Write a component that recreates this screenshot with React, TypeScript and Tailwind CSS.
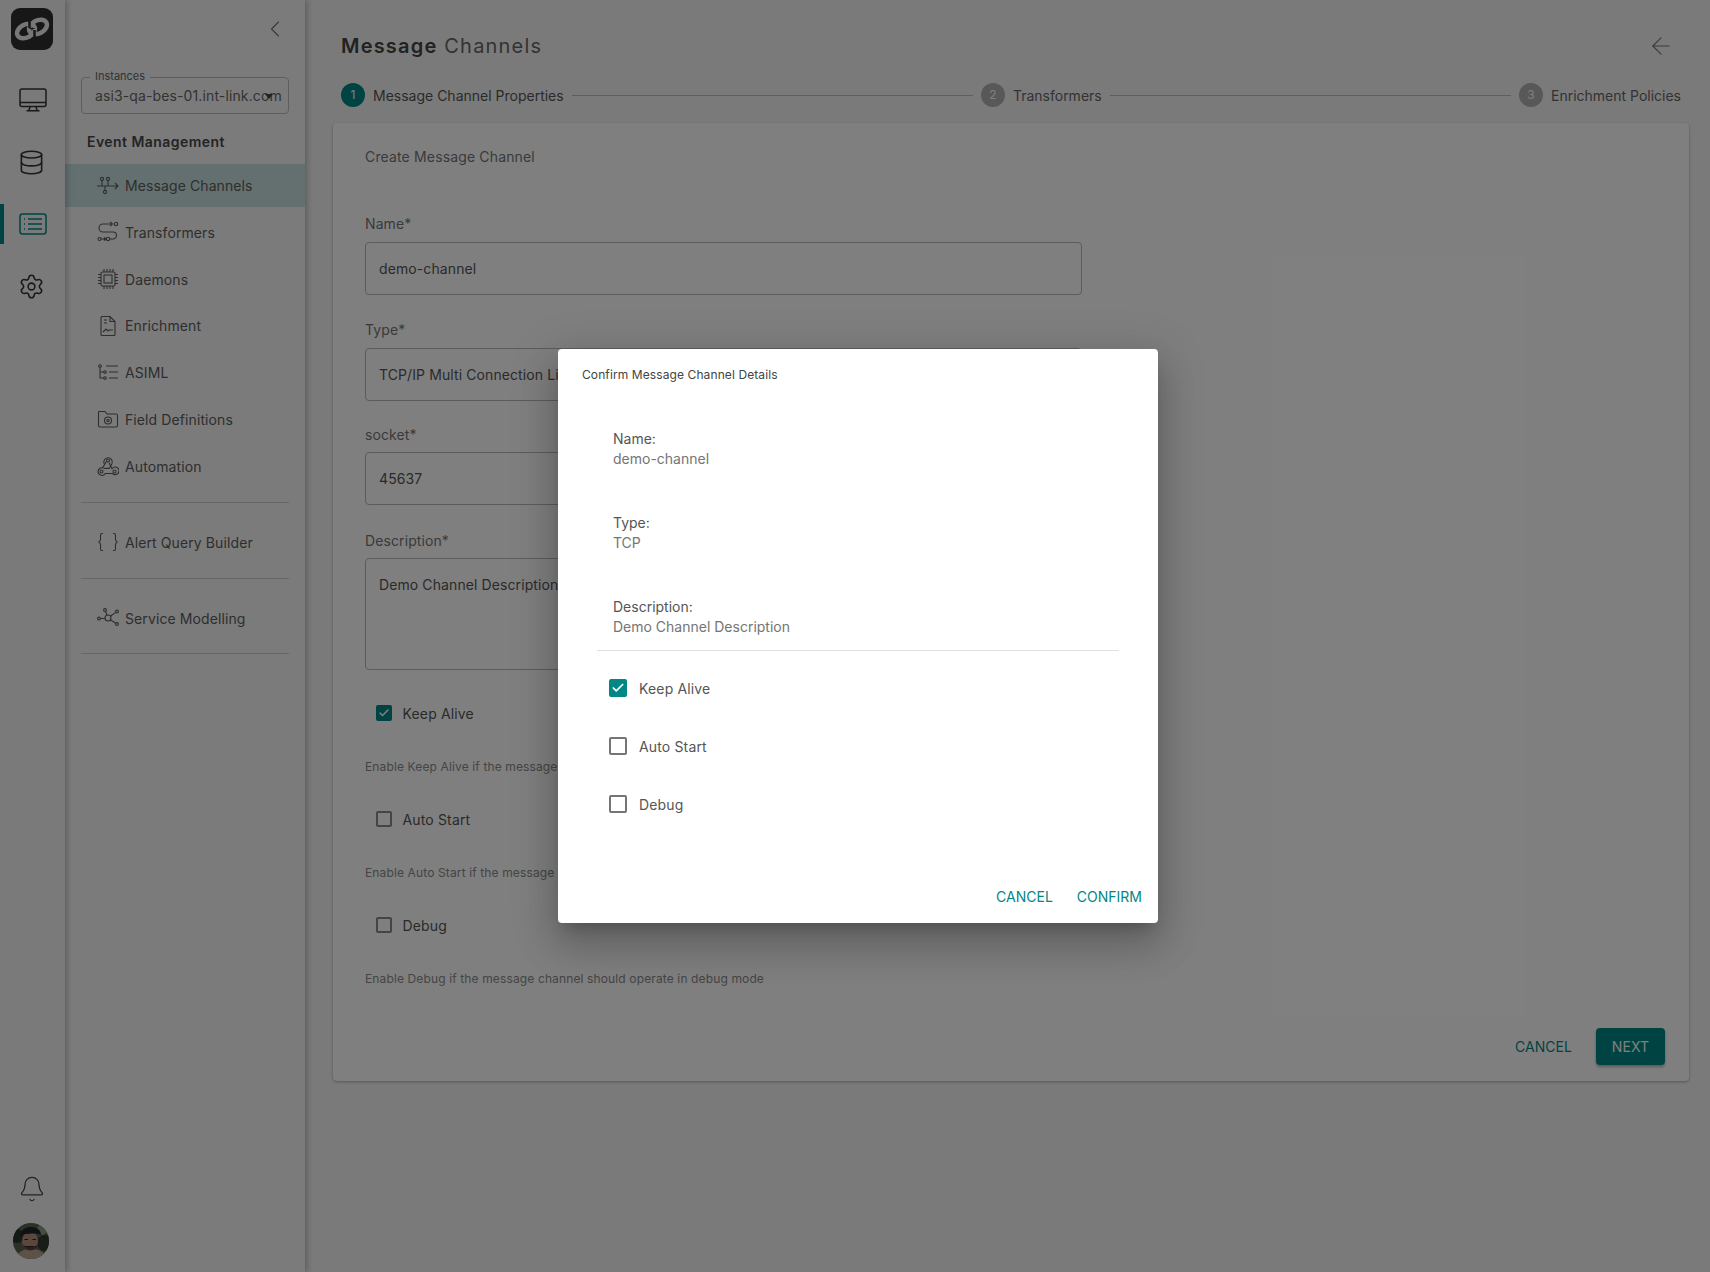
import { ArrowLeft, Bell, Check, ChevronLeft, Database, Settings } from "lucide-react";
import type { ReactNode } from "react";

const MonitorIcon = () => (
  <svg width="28" height="24" viewBox="0 0 28 24" fill="none" stroke="currentColor" strokeWidth="1.500">
    <rect x="1" y="1" width="26" height="17.500" rx="2" />
    <path d="M1 14.500h26M11 18.500l-1 4M17 18.500l1 4M7.500 22.800h13" />
  </svg>
);

const MessageIcon = () => (
  <svg width="22" height="22" viewBox="0 0 22 22" fill="none" stroke="currentColor" strokeWidth="1.100">
    <circle cx="5" cy="4" r="1.600" />
    <circle cx="11" cy="4" r="1.600" />
    <circle cx="8" cy="17" r="1.600" />
    <path d="M5 5.600V11M11 5.600V11M8 11v4.400M0 11h21M18 8l3 3-3 3" />
  </svg>
);

const TransformIcon = () => (
  <svg width="22" height="22" viewBox="0 0 22 22" fill="none" stroke="currentColor" strokeWidth="1.100">
    <path d="M15 3H6a4 4 0 0 0 0 8h10a3.500 3.500 0 0 1 0 7h-3" />
    <path d="M13 1l2.500 2-2.500 2" />
    <circle cx="19" cy="3" r="1.700" />
    <circle cx="2.500" cy="18" r="1.500" />
    <circle cx="11" cy="18" r="1.700" />
    <path d="M4 18h5M7 16.500l2 1.500-2 1.500" />
  </svg>
);

const ChipIcon = () => (
  <svg width="22" height="22" viewBox="0 0 22 22" fill="none" stroke="currentColor" strokeWidth="1.100">
    <rect x="4" y="4" width="14" height="14" rx="1.500" />
    <rect x="7" y="7" width="8" height="8" />
    <path d="M7 1v3M10 1v3M13 1v3M16 1v3M7 18v3M10 18v3M13 18v3M16 18v3M1 6.500h3M1 9.500h3M1 12.500h3M1 15.500h3M18 6.500h3M18 9.500h3M18 12.500h3M18 15.500h3" />
  </svg>
);

const FileIcon = () => (
  <svg width="22" height="22" viewBox="0 0 22 22" fill="none" stroke="currentColor" strokeWidth="1.100">
    <path d="M5 1.500h8l5 5v13a1 1 0 0 1-1 1H5a1 1 0 0 1-1-1v-17a1 1 0 0 1 1-1z" />
    <path d="M13 1.500v5h5M7 5h3M7 8h3M6 17l3-3 2 2 1-1h4" />
  </svg>
);

const TreeIcon = () => (
  <svg width="22" height="22" viewBox="0 0 22 22" fill="none" stroke="currentColor" strokeWidth="1.100">
    <circle cx="3" cy="4" r="1.300" />
    <circle cx="8" cy="10" r="1.300" />
    <circle cx="8" cy="16" r="1.300" />
    <path d="M3 5.300V16h3.700M3 10h3.700M9 4h12M12 10h9M12 16h9" />
  </svg>
);

const FolderIcon = () => (
  <svg width="22" height="22" viewBox="0 0 22 22" fill="none" stroke="currentColor" strokeWidth="1.100">
    <path d="M2 3.500h6l2 2.500h9a1.500 1.500 0 0 1 1.500 1.500v10a1.500 1.500 0 0 1-1.500 1.500H3a1.500 1.500 0 0 1-1.500-1.500V4a.5.500 0 0 1 .5-.5z" />
    <circle cx="11" cy="12.500" r="3.500" />
    <circle cx="11" cy="12.500" r="1.200" />
  </svg>
);

const AutomationIcon = () => (
  <svg width="22" height="22" viewBox="0 0 22 22" fill="none" stroke="currentColor" strokeWidth="1.100">
    <circle cx="11" cy="5.500" r="1.500" />
    <circle cx="4.500" cy="16.500" r="1.500" />
    <circle cx="17.500" cy="16.500" r="1.500" />
    <path d="M7.300 8.800a4.200 4.200 0 1 1 7.700-.4l-2.800 5H6.500" />
    <path d="M9.500 6.500l-4 6.300a3.800 3.800 0 1 0 2.700 5.700h7.300a3.800 3.800 0 1 0-.5-4.800l-3-6" />
  </svg>
);

const BracesIcon = () => (
  <svg width="22" height="22" viewBox="0 0 22 22" fill="none" stroke="currentColor" strokeWidth="1.100">
    <path d="M6 2.500H5a1.500 1.500 0 0 0-1.500 1.500v5L1.800 11l1.700 2v5A1.500 1.500 0 0 0 5 19.500h1" />
    <path d="M16 2.500h1A1.500 1.500 0 0 1 18.500 4v5l1.700 2-1.700 2v5a1.500 1.500 0 0 1-1.500 1.500h-1" />
  </svg>
);

const NodesIcon = () => (
  <svg width="22" height="22" viewBox="0 0 22 22" fill="none" stroke="currentColor" strokeWidth="1.100">
    <circle cx="11" cy="11" r="3" />
    <circle cx="8" cy="3" r="1.400" />
    <circle cx="2" cy="11.500" r="1.400" />
    <circle cx="20" cy="4.500" r="1.400" />
    <circle cx="20" cy="17" r="1.400" />
    <path d="M8.500 4.300l1.500 4M3.400 11.500H8M18.900 5.400l-5.700 3.800M18.800 16.200l-5.600-3.400" />
  </svg>
);

const ListBoxIcon = () => (
  <svg width="28" height="22" viewBox="0 0 28 22" fill="none" stroke="currentColor" strokeWidth="1.500">
    <rect x="1" y="1" width="26" height="20" rx="2.500" />
    <path d="M9 6h14M9 11h14M9 16h14" />
    <path d="M5 6h.8M5 11h.8M5 16h.8" strokeWidth="2" />
  </svg>
);

// two tilted links cut by the dark gaps
const Logo = () => (
  <div className="mr-[2px] flex h-[42px] w-[42px] items-center justify-center rounded-[9px] bg-[#2e2e2e]">
    <svg width="36" height="26" viewBox="0 0 36 26" fill="none">
      <ellipse cx="12" cy="15" rx="9.500" ry="6.500" transform="rotate(-28 12 15)" stroke="#efefef" strokeWidth="4.500" />
      <ellipse cx="24" cy="11" rx="9.500" ry="6.500" transform="rotate(-28 24 11)" stroke="#efefef" strokeWidth="4.500" />
      <path d="M15.500 3v9M20.500 14v10" stroke="#2e2e2e" strokeWidth="2.500" />
      <path d="M15.500 12.500h5" stroke="#2e2e2e" strokeWidth="1" />
    </svg>
  </div>
);

const Avatar = () => (
  <svg width="36" height="36" viewBox="0 0 36 36" className="rounded-full">
    <rect width="36" height="36" fill="#56634e" />
    <circle cx="4" cy="13" r="7" fill="#2b3428" />
    <circle cx="32" cy="20" r="8" fill="#2f3a2c" />
    <circle cx="29" cy="7" r="5" fill="#8d9a80" />
    <path d="M3 36c1-7 7-10 15-10s14 3 15 10z" fill="#b8a595" />
    <ellipse cx="17" cy="18" rx="8" ry="10" fill="#b68f7a" />
    <path d="M7 13c1-7 6-9 11-9 6 0 10 3 10 8-6-2-14-2-21 1z" fill="#20242a" />
    <path d="M10 22c2 7 13 7 15 0-2 1-4 1-7.500 1S12 23 10 22z" fill="#5a4038" />
    <path d="M13.500 23.500h7" stroke="#33241f" strokeWidth="1.200" />
    <path d="M11.500 16.500h3.500M19.500 16.500H23" stroke="#2a1f1c" strokeWidth="1.200" />
  </svg>
);

const navItems = [
  { label: "Message Channels", icon: <MessageIcon />, active: true },
  { label: "Transformers", icon: <TransformIcon /> },
  { label: "Daemons", icon: <ChipIcon /> },
  { label: "Enrichment", icon: <FileIcon /> },
  { label: "ASIML", icon: <TreeIcon /> },
  { label: "Field Definitions", icon: <FolderIcon /> },
  { label: "Automation", icon: <AutomationIcon /> },
];

const NavRow = ({ label, icon, active }: { label: string; icon: ReactNode; active?: boolean }) => (
  <div className={`flex h-[43px] items-center gap-[6px] pl-8 text-[#5c5c5c] ${active ? "bg-[#c8e0e0]" : ""}`}>
    <span className="flex w-[22px] justify-center">{icon}</span>
    <span className="text-[14px] tracking-[0.1px]">{label}</span>
  </div>
);

const Field = ({ label, top, gap, height, children }: { label: string; top: string; gap: string; height: string; children: ReactNode }) => (
  <div className={top}>
    <div className="text-[14px] leading-5 tracking-[0.1px] text-[#757575]">{label}</div>
    <div className={`w-[717px] rounded border border-[#b8b8b8] px-[13px] text-[14px] tracking-[0.1px] text-[#555555] ${gap} ${height}`}>
      {children}
    </div>
  </div>
);

const CardCheck = ({ label, checked, top }: { label: string; checked?: boolean; top: string }) => (
  <div className={`flex h-5 items-center gap-[11px] pl-[10.500px] ${top}`}>
    {checked ? (
      <span className="flex h-4 w-4 items-center justify-center rounded-[2px] bg-[#018786] text-white">
        <Check size={12} strokeWidth={3} />
      </span>
    ) : (
      <span className="h-4 w-4 rounded-[2px] border-2 border-[#8a8a8a]" />
    )}
    <span className="text-[14px] tracking-[0.15px] text-[#555555]">{label}</span>
  </div>
);

const Help = ({ children, top }: { children: ReactNode; top: string }) => (
  <div className={`h-4 text-[12px] leading-4 tracking-[0.13px] text-[#8a8a8a] ${top}`}>{children}</div>
);

const Step = ({ n, label, active }: { n: number; label: string; active?: boolean }) => (
  <div className="flex shrink-0 items-center gap-2">
    <span className={`flex h-6 w-6 items-center justify-center rounded-full text-[12px] ${active ? "bg-[#018786] text-white" : "bg-[#b0b0b0] text-white"}`}>
      {n}
    </span>
    <span className={`text-[14px] ${active ? "text-[#555555]" : "text-[#666666]"}`}>{label}</span>
  </div>
);

const StepLine = () => <div className="mx-2 h-px flex-1 bg-[#bdbdbd]" />;

const Detail = ({ label, value, top }: { label: string; value: string; top?: string }) => (
  <div className={`text-[14px] leading-5 ${top ?? ""}`}>
    <div className="text-[#555555]">{label}</div>
    <div className="text-[#757575]">{value}</div>
  </div>
);

const ModalCheck = ({ label, checked, top }: { label: string; checked?: boolean; top?: string }) => (
  <div className={`flex h-[18px] items-center gap-3 ${top ?? ""}`}>
    {checked ? (
      <span className="flex h-[18px] w-[18px] items-center justify-center rounded-[2px] bg-[#018786] text-white">
        <Check size={14} strokeWidth={3} />
      </span>
    ) : (
      <span className="h-[18px] w-[18px] rounded-[2px] border-2 border-[#757575]" />
    )}
    <span className="text-[14px] tracking-[0.15px] text-[#555555]">{label}</span>
  </div>
);

export default function App() {
  return (
    <div className="relative flex h-screen overflow-hidden bg-[#f5f5f5] font-['Inter',sans-serif]">
      {/* Icon rail */}
      <aside className="z-20 flex w-[65px] shrink-0 flex-col items-center bg-[#f5f5f5] pb-[13px] pt-2 shadow-[2px_0_6px_rgba(0,0,0,0.25)]">
        <Logo />
        <div className="mt-[30px] flex flex-col items-center gap-[22px] text-[#333333]">
          <div className="flex h-10 items-center"><MonitorIcon /></div>
          <div className="mr-[2px] flex h-10 items-center"><Database size={27} strokeWidth={1.4} /></div>
          <div className="relative flex h-10 items-center text-[#018786]">
            <span className="absolute left-[-18.500px] top-0 h-10 w-1 bg-[#018786]" />
            <ListBoxIcon />
          </div>
          <div className="mr-[2px] flex h-10 items-center"><Settings size={27} strokeWidth={1.4} /></div>
        </div>
        <div className="mt-auto flex flex-col items-center gap-5 pr-[3px] text-[#444444]">
          <div className="ml-[2px]"><Bell size={28} strokeWidth={1.100} /></div>
          <Avatar />
        </div>
      </aside>

      {/* Sidebar */}
      <aside className="z-10 w-60 shrink-0 bg-[#f7f7f7] shadow-[2px_0_6px_rgba(0,0,0,0.25)]">
        <div className="flex justify-end pr-4 pt-[15px] text-[#757575]">
          <ChevronLeft size={28} strokeWidth={1} />
        </div>
        <div className="relative mx-4 mt-[34px] h-[37px] rounded border border-[#bdbdbd] pl-[13px] text-[14px] leading-[35px] text-[#666666]">
          <span className="absolute -top-[9px] left-[8px] bg-[#f7f7f7] px-[5px] text-[11px] leading-[14px] text-[#666666]">Instances</span>
          <span className="whitespace-nowrap tracking-[0.12px]">asi3-qa-bes-01.int-link.com</span>
          <span className="absolute right-[15px] top-[16px] h-0 w-0 border-x-[4px] border-t-[5px] border-x-transparent border-t-[#444444]" />
        </div>
        <div className="mt-[18px] pl-[22px] text-[14px] font-semibold leading-5 tracking-[0.45px] text-[#484848]">Event Management</div>
        <nav className="mt-3 flex flex-col gap-[3.800px]">
          {navItems.map((item) => (
            <NavRow key={item.label} {...item} />
          ))}
        </nav>
        <div className="mx-4 mt-[14px] h-px bg-[#cccccc]" />
        <div className="mt-[18px]"><NavRow label="Alert Query Builder" icon={<BracesIcon />} /></div>
        <div className="mx-4 mt-[14px] h-px bg-[#cccccc]" />
        <div className="mt-[18px]"><NavRow label="Service Modelling" icon={<NodesIcon />} /></div>
        <div className="mx-4 mt-[13px] h-px bg-[#cccccc]" />
      </aside>

      {/* Main */}
      <main className="min-w-0 flex-1 pl-7 pr-[21px]">
        <div className="mt-[34px] flex h-6 items-center justify-between pl-2 pr-[14px]">
          <h1 className="text-[20px] font-normal tracking-[1.200px] text-[#666666]">
            <span className="font-semibold text-[#444444]">Message</span> Channels
          </h1>
          <ArrowLeft size={28} strokeWidth={1} className="text-[#777777]" />
        </div>
        <div className="mt-[25px] flex items-center pl-2 pr-2">
          <Step n={1} label="Message Channel Properties" active />
          <StepLine />
          <Step n={2} label="Transformers" />
          <StepLine />
          <Step n={3} label="Enrichment Policies" />
        </div>

        <section className="mt-4 rounded bg-white pb-4 pl-8 pr-6 pt-6 shadow-[0_1px_3px_rgba(0,0,0,0.3)]">
          <div className="text-[14px] leading-5 tracking-[0.15px] text-[#757575]">Create Message Channel</div>
          <Field label="Name*" top="mt-[47px]" gap="mt-2" height="flex h-[53px] items-center">demo-channel</Field>
          <Field label="Type*" top="mt-[25px]" gap="mt-2" height="flex h-[53px] items-center">TCP/IP Multi Connection Listener</Field>
          <Field label="socket*" top="mt-[24px]" gap="mt-[7px]" height="flex h-[53px] items-center">45637</Field>
          <Field label="Description*" top="mt-[26px]" gap="mt-[7px]" height="h-[112px] pt-[15px]">Demo Channel Description</Field>
          <CardCheck label="Keep Alive" checked top="mt-[33px]" />
          <Help top="mt-[36px]">Enable Keep Alive if the message channel should stay connected</Help>
          <CardCheck label="Auto Start" top="mt-[34px]" />
          <Help top="mt-[36px]">Enable Auto Start if the message channel should start automatically</Help>
          <CardCheck label="Debug" top="mt-[34px]" />
          <Help top="mt-[36px]">Enable Debug if the message channel should operate in debug mode</Help>
          <div className="mt-[41px] flex items-center justify-end gap-6">
            <button className="text-[14px] tracking-[0.05px] text-[#018786]">CANCEL</button>
            <button className="h-[37px] w-[69px] rounded bg-[#018786] text-[14px] tracking-[0.1px] text-white shadow-[0_2px_3px_rgba(0,0,0,0.3)]">NEXT</button>
          </div>
        </section>
      </main>

      {/* Confirm dialog */}
      <div className="absolute inset-0 z-30 flex items-center justify-center bg-black/50 pl-[6px]">
        <div className="flex h-[574px] w-[600px] flex-col rounded bg-white shadow-[0_11px_15px_-7px_rgba(0,0,0,0.2),0_24px_38px_3px_rgba(0,0,0,0.14),0_9px_46px_8px_rgba(0,0,0,0.12)]">
          <div className="pl-6 pt-[18px] text-[12px] leading-4 tracking-[0.1px] text-[#444444]">Confirm Message Channel Details</div>
          <div className="mx-[39px] mt-[46px] border-b border-[#e0e0e0] pb-[13px] pl-4">
            <Detail label="Name:" value="demo-channel" />
            <Detail label="Type:" value="TCP" top="mt-[44px]" />
            <Detail label="Description:" value="Demo Channel Description" top="mt-[44px]" />
          </div>
          <div className="pl-[51px] pt-[28px]">
            <ModalCheck label="Keep Alive" checked />
            <ModalCheck label="Auto Start" top="mt-10" />
            <ModalCheck label="Debug" top="mt-10" />
          </div>
          <div className="mt-auto flex justify-end gap-6 pb-4 pr-4 text-[14px] leading-5 text-[#018786]">
            <button>CANCEL</button>
            <button>CONFIRM</button>
          </div>
        </div>
      </div>
    </div>
  );
}
